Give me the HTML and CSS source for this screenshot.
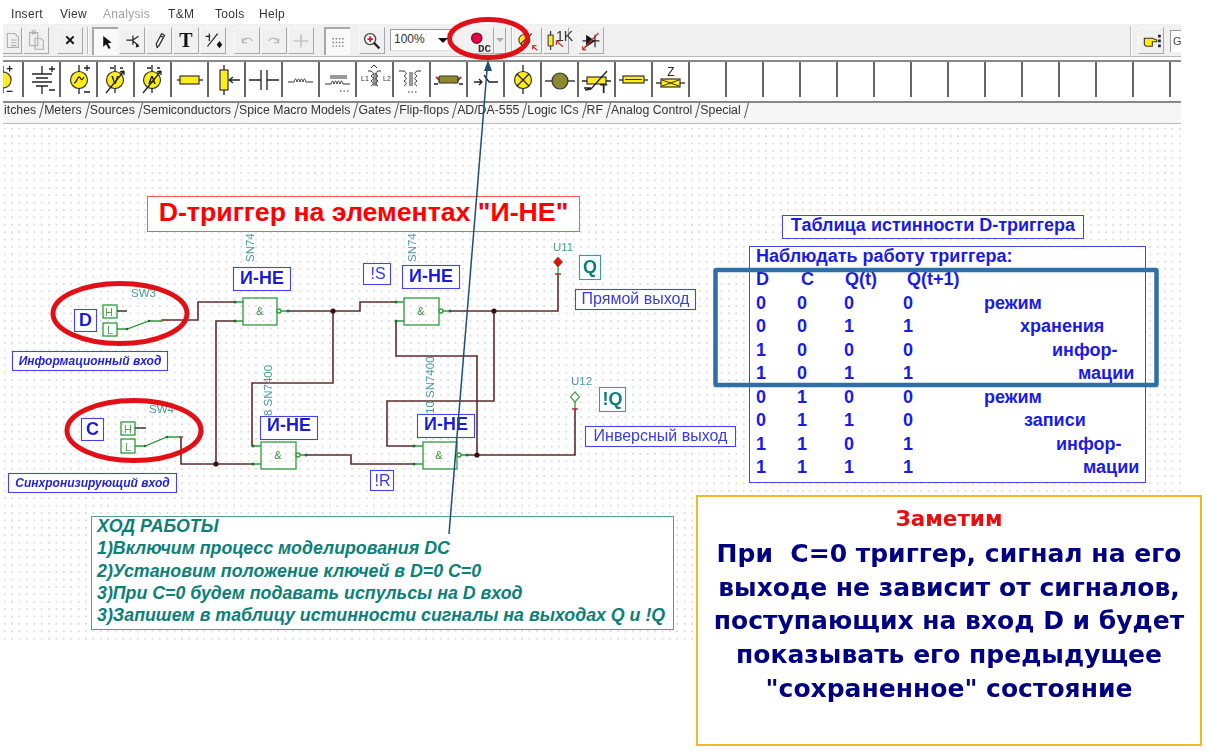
FILE: index.html
```html
<!DOCTYPE html>
<html lang="ru">
<head>
    <meta charset="UTF-8">
    <title>D-триггер на элементах И-НЕ</title>
    <link rel="stylesheet" href="styles.css">
</head>
<body>
<div class="app">
    <!-- Menu -->
    <div class="menu">
        <span class="m-insert">Insert</span><span class="m-view">View</span><span class="m-analysis">Analysis</span><span class="m-tm">T&amp;M</span><span class="m-tools">Tools</span><span>Help</span>
    </div>

    <!-- Main toolbar -->
    <div class="toolbar">
        <div class="btn cut"><svg viewBox="10 0 18 27"><path class="faint" d="M14 6h8l4 4v11H14z M18 13h6 M18 16h6 M18 19h6"/></svg></div>
        <div class="btn dim"><svg viewBox="0 0 26 27"><path class="faint" d="M6 5h9v14H6z M9 3h3v3H9z M12 11h6l3 3v9h-9z"/></svg></div>
        <div class="btn gap-8"><svg viewBox="0 0 26 27"><path class="x" d="M9 9l8 8 M17 9l-8 8"/></svg></div>
        <div class="vsep"></div>
        <div class="btn on gap-3"><svg viewBox="0 0 26 27"><path class="solid" d="M10 7l0 12 3-3 3 5 2-1-3-5 4-1z"/></svg></div>
        <div class="btn"><svg viewBox="0 0 26 27"><path class="line" d="M7 13h7 M14 8v10 M14 13l6-4 M14 14l6 5"/><path class="solid" d="M18 17l3 3-4 1z"/></svg></div>
        <div class="btn"><svg viewBox="0 0 26 27"><path class="line" d="M11 21l-1-4 6-11 3 2-6 11z M14 8l3 2"/></svg></div>
        <div class="btn serif">T</div>
        <div class="btn"><svg viewBox="0 0 26 27"><path class="line" d="M5 9h5 M9 6v8 M7 20L18 6"/><path class="solid" d="M20 14l3 4-3 4-3-4z"/></svg></div>
        <div class="btn gap-8"><svg viewBox="0 0 26 27"><path class="faint" d="M8 16a6 6 0 0 1 11-2 M8 11v5h5"/></svg></div>
        <div class="btn"><svg viewBox="0 0 26 27"><path class="faint" d="M18 16a6 6 0 0 0-11-2 M18 11v5h-5"/></svg></div>
        <div class="btn"><svg viewBox="0 0 26 27"><path class="faint" d="M5 14h16 M13 7v14"/></svg></div>
        <div class="btn on gap-10"><svg viewBox="0 0 26 27"><path class="dots" d="M7 10h13 M7 14h13 M7 18h13"/></svg></div>
        <div class="btn gap-9"><svg viewBox="0 0 26 27"><circle class="lens" cx="11" cy="12" r="6"/><path class="handle" d="M15 16l6 6"/><path class="red-plus" d="M8 12h6 M11 9v6"/></svg></div>
        <div class="zoom-select"><span>100%</span><i class="caret"></i></div>
        <div class="btn dc gap-14"><svg viewBox="0 0 28 27"><circle class="led" cx="11" cy="11" r="5.5"/></svg><b>DC</b></div>
        <div class="btn drop"><i class="caret light"></i></div>
        <div class="vsep small"></div>
        <div class="btn gap-3"><svg viewBox="0 0 26 27"><circle class="ylw" cx="8" cy="13" r="6"/><path class="line" d="M4 17L16 6"/><path class="dark-red" d="M17 20l5 4 M17 23v-4h4"/></svg></div>
        <div class="btn"><svg viewBox="0 0 29 27"><path class="line" d="M8 2v5 M8 20v5"/><rect class="ylw" x="5" y="7" width="6" height="13"/><path class="dark-red" d="M16 15l7 6 M15 19v-5h5"/></svg><b class="onek">1K</b></div>
        <div class="btn gap-9"><svg viewBox="0 0 27 27"><path class="solid" d="M8 7l10 7-10 7z"/><path class="line" d="M18 7v14 M4 14h19"/><path class="dark-red" d="M4 24L22 5 M4 24v-4 M4 24h4"/></svg></div>
        <div class="push"></div>
        <div class="vsep tall"></div>
        <div class="btn gap-6"><svg viewBox="0 0 27 27"><path class="ylw" d="M6 11h9l5 2v2h-5v5H8l-2-2z"/><path class="dots-v" d="M23 7v14"/></svg></div>
        <div class="field gap-6">G</div>
    </div>

    <!-- Component palette -->
    <div class="palette">
        <div class="cell first"><svg viewBox="16 0 20 35"><circle class="ylw" cx="16" cy="18" r="8.5"/><path class="line" d="M16 3v7 M16 26v6 M20 6h6 M23 3v6 M20 30h6"/></svg></div>
        <div class="cell"><svg viewBox="0 0 35 35"><path class="line" d="M18 4v8 M8 12h20 M12 16h12 M8 20h20 M12 24h12 M18 24v8 M25 7h6 M28 4v6 M25 28h6"/></svg></div>
        <div class="cell"><svg viewBox="0 0 35 35"><circle class="ylw" cx="18" cy="18" r="8.5"/><path class="line" d="M18 3v7 M18 26v6 M23 6h6 M26 3v6 M23 30h6 M13 21c3 0 3-6 5-6 2 0 2 6 5 0"/></svg></div>
        <div class="cell"><svg viewBox="0 0 35 35"><circle class="ylw" cx="17" cy="18" r="8.5"/><path class="line" d="M17 3v7 M17 26v5 M8 31l18-22 M26 9l-4 1 M26 9v4 M12 6h4 M22 6h3"/><text class="meter" x="17" y="22">V</text></svg></div>
        <div class="cell"><svg viewBox="0 0 35 35"><circle class="ylw" cx="17" cy="18" r="8.5"/><path class="line" d="M17 3v7 M17 26v5 M8 31l18-22 M26 9l-4 1 M26 9v4 M12 6h4 M22 6h3"/><text class="meter" x="17" y="22">A</text></svg></div>
        <div class="cell"><svg viewBox="0 0 35 35"><path class="line" d="M5 18h26"/><rect class="ylw" x="8" y="14" width="19" height="8"/></svg></div>
        <div class="cell"><svg viewBox="0 0 35 35"><path class="line" d="M15 3v30 M31 18H20 M24 15l-4 3 4 3"/><rect class="ylw" x="11" y="8" width="8" height="20"/></svg></div>
        <div class="cell"><svg viewBox="0 0 35 35"><path class="line" d="M3 18h12 M15 8v20 M21 8v20 M21 18h12"/></svg></div>
        <div class="cell"><svg viewBox="0 0 35 35"><path class="thin" d="M5 20h6c1-4 2-4 3 0 1-4 2-4 3 0 1-4 2-4 3 0 1-4 2-4 3 0h7"/></svg></div>
        <div class="cell"><svg viewBox="0 0 35 35"><path class="thin" d="M5 22h6c1-4 2-4 3 0 1-4 2-4 3 0 1-4 2-4 3 0 1-4 2-4 3 0h7 M10 14h17 M10 16h17"/><path class="dots" d="M20 29h9"/></svg></div>
        <div class="cell"><svg viewBox="0 0 35 35"><path class="thin" d="M11 9h3c3 2 3 3 0 5 3 2 3 3 0 5 3 2 3 3 0 5 M24 9h-3c-3 2-3 3 0 5-3 2-3 3 0 5-3 2-3 3 0 5 M17 11v13 M19 11v13 M14 6l3-3 3 3"/><text class="tiny" x="4" y="19">L1</text><text class="tiny" x="26" y="19">L2</text></svg></div>
        <div class="cell"><svg viewBox="0 0 35 35"><path class="thin" d="M5 9h5c3 2 3 3 0 5 3 2 3 3 0 5 3 2 3 3 0 5 M27 9h-4c-3 2-3 3 0 5-3 2-3 3 0 5-3 2-3 3 0 5 M16 10v14 M18 10v14"/><path class="dots" d="M14 30h9"/></svg></div>
        <div class="cell"><svg viewBox="0 0 35 35"><path class="red-line" d="M5 15l7 6 M30 15l-6 6"/><rect class="olive" x="8" y="14" width="19" height="7" rx="1"/><path class="line" d="M3 22h4 M28 22h4"/></svg></div>
        <div class="cell"><svg viewBox="0 0 35 35"><path class="line" d="M6 20h7 M11 17l3 3-3 3 M16 13l5 7 M21 20h9"/></svg></div>
        <div class="cell"><svg viewBox="0 0 35 35"><circle class="ylw" cx="18" cy="18" r="8.5"/><path class="line" d="M18 3v7 M18 26v6 M12 12l12 12 M24 12L12 24"/></svg></div>
        <div class="cell"><svg viewBox="0 0 35 35"><path class="line" d="M3 19h30"/><circle class="olive" cx="18" cy="19" r="8"/></svg></div>
        <div class="cell"><svg viewBox="0 0 35 35"><rect class="ylw" x="8" y="15" width="19" height="7"/><path class="line" d="M3 19h5 M27 19h5 M6 28l6-1 M12 27L28 9 M5 26h7"/></svg><b class="tee">T</b></div>
        <div class="cell"><svg viewBox="0 0 35 35"><path class="line" d="M3 18h29"/><rect class="ylw" x="7" y="14" width="21" height="7"/><path class="thin" d="M9 17.500h17"/></svg></div>
        <div class="cell"><svg viewBox="0 0 35 35"><path class="line" d="M3 21h29"/><rect class="ylw" x="8" y="17" width="19" height="8"/><path class="thin" d="M9 18l17 6 M9 24l17-6"/><text class="zee" x="18" y="14">Z</text></svg></div>
        <div class="cell"></div><div class="cell"></div><div class="cell"></div><div class="cell"></div>
        <div class="cell"></div><div class="cell"></div><div class="cell"></div><div class="cell"></div>
        <div class="cell"></div><div class="cell"></div><div class="cell"></div><div class="cell"></div>
        <div class="cell"></div><div class="cell"></div><div class="cell"></div>
    </div>

    <!-- Tabs -->
    <div class="tabs">
        <span class="tab">itches</span>
        <span class="tab">Meters</span>
        <span class="tab">Sources</span>
        <span class="tab">Semiconductors</span>
        <span class="tab">Spice Macro Models</span>
        <span class="tab">Gates</span>
        <span class="tab">Flip-flops</span>
        <span class="tab">AD/DA-555</span>
        <span class="tab">Logic ICs</span>
        <span class="tab">RF</span>
        <span class="tab">Analog Control</span>
        <span class="tab">Special</span>
    </div>

    <!-- Schematic sheet -->
    <div class="sheet">
        <svg class="schematic" viewBox="0 124 1181 516">
            <!-- wires -->
            <g class="wire">
                <path d="M163 320h35v-18h37"/>
                <path d="M288 311h72v-9h36"/>
                <path d="M450 311h108v-38"/>
                <path d="M396 321v35h81v99"/>
                <path d="M494 311v90h-107v45h27"/>
                <path d="M306 455h45v9h63"/>
                <path d="M252 446v-63h81v-72"/>
                <path d="M181 437v27h72"/>
                <path d="M216 464V321h19"/>
                <path d="M466 455h109v-47"/>
            </g>
            <circle class="node" cx="333" cy="311" r="2.600"/>
            <circle class="node" cx="494" cy="311" r="2.600"/>
            <circle class="node" cx="216" cy="464" r="2.600"/>
            <circle class="node" cx="477" cy="455" r="2.600"/>

            <!-- gates -->
            <g class="part">
                <rect x="243" y="298" width="34" height="27"/><circle cx="279" cy="311" r="2"/><path d="M235 302h8 M235 321h8 M281 311h7"/>
                <rect x="404" y="298" width="35" height="27"/><circle cx="441" cy="311" r="2"/><path d="M396 302h8 M396 321h8 M443 311h7"/>
                <rect x="261" y="442" width="35" height="27"/><circle cx="298" cy="455" r="2"/><path d="M253 446h8 M253 464h8 M300 455h6"/>
                <rect x="423" y="442" width="34" height="27"/><circle cx="459" cy="455" r="2"/><path d="M414 446h9 M414 464h9 M461 455h9"/>
                <!-- switches -->
                <rect x="103" y="305" width="14" height="13"/><rect x="103" y="323" width="14" height="13"/>
                <path d="M117 329h10l22-8h14"/>
                <rect x="121" y="422" width="14" height="13"/><rect x="121" y="439" width="14" height="14"/>
                <path d="M135 446h10l22-9h14"/>
                <path d="M558 262v11 M575 401v7"/>
            </g>
            <path class="stub" d="M117 311h10 M135 428h11"/>
            <g class="pins">
                <circle cx="235" cy="302" r="1.500"/><circle cx="235" cy="321" r="1.500"/><circle cx="288" cy="311" r="1.500"/>
                <circle cx="396" cy="302" r="1.500"/><circle cx="396" cy="321" r="1.500"/><circle cx="450" cy="311" r="1.500"/>
                <circle cx="253" cy="446" r="1.500"/><circle cx="253" cy="464" r="1.500"/><circle cx="306" cy="455" r="1.500"/>
                <circle cx="414" cy="446" r="1.500"/><circle cx="414" cy="464" r="1.500"/><circle cx="467" cy="455" r="1.500"/>
                <circle cx="127" cy="329" r="1.300"/><circle cx="149" cy="321" r="1.300"/><circle cx="145" cy="446" r="1.300"/><circle cx="167" cy="437" r="1.300"/>
            </g>
            <path class="tick" d="M161 320h4 M179 437h4 M555 274h6 M572 409h6"/>
            <text class="amp" x="260" y="315">&amp;</text>
            <text class="amp" x="421" y="315">&amp;</text>
            <text class="amp" x="278" y="459">&amp;</text>
            <text class="amp" x="439" y="459">&amp;</text>
            <text class="mid hl" x="109" y="316">H</text>
            <text class="mid hl" x="110" y="334">L</text>
            <text class="mid hl" x="128" y="433">H</text>
            <text class="mid hl" x="128" y="451">L</text>

            <!-- probes -->
            <path class="probe-on" d="M558 257l4.500 5-4.500 5-4.500-5z"/>
            <path class="probe-off" d="M575 392l4.500 5-4.500 5-4.500-5z"/>

            <!-- teal refs -->
            <text class="ref" x="131" y="297">SW3</text>
            <text class="ref" x="149" y="413">SW4</text>
            <text class="ref" x="553" y="251">U11</text>
            <text class="ref" x="571" y="385">U12</text>
            <text class="ref" transform="translate(254 262) rotate(-90)">SN74</text>
            <text class="ref" transform="translate(416 262) rotate(-90)">SN74</text>
            <text class="ref" transform="translate(272 416) rotate(-90)">8 SN7400</text>
            <text class="ref" transform="translate(434 414) rotate(-90)">10 SN7400</text>

            <!-- blue labels -->
            <g class="tag">
                <rect x="74.500" y="309.500" width="22" height="22"/>
                <rect x="81.500" y="418.500" width="22" height="22"/>
                <rect x="12.500" y="351.500" width="155" height="19"/>
                <rect x="8.500" y="473.500" width="168" height="19"/>
                <rect x="233.500" y="267.500" width="57" height="23"/>
                <rect x="402.500" y="265.500" width="57" height="23"/>
                <rect x="260.500" y="416.500" width="57" height="23"/>
                <rect x="417.500" y="414.500" width="57" height="23"/>
                <rect x="363.500" y="263.500" width="27" height="21"/>
                <rect x="370.500" y="470.500" width="23" height="20"/>
                <rect x="575.500" y="289.500" width="120" height="20"/>
                <rect x="585.500" y="426.500" width="150" height="20"/>
            </g>
            <g class="tag teal">
                <rect x="579.500" y="255.500" width="21" height="24"/>
                <rect x="599.500" y="387.500" width="26" height="24"/>
            </g>
            <text class="mid big" x="85.500" y="326">D</text>
            <text class="mid big" x="92.500" y="435">C</text>
            <text class="mid gate" x="262" y="283.500">И-НЕ</text>
            <text class="mid gate" x="431" y="281.500">И-НЕ</text>
            <text class="mid gate" x="289" y="431">И-НЕ</text>
            <text class="mid gate" x="446" y="430">И-НЕ</text>
            <text class="mid plain" x="378" y="279">!S</text>
            <text class="mid plain" x="382.500" y="486">!R</text>
            <text class="mid plain" x="635.500" y="304">Прямой выход</text>
            <text class="mid plain" x="660.500" y="441">Инверсный выход</text>
            <text class="mid italic" x="90" y="365">Информационный вход</text>
            <text class="mid italic" x="92.500" y="487">Синхронизирующий вход</text>
            <text class="mid big teal-text" x="590" y="273">Q</text>
            <text class="mid big teal-text" x="612.500" y="405">!Q</text>
        </svg>

        <div class="title">D-триггер на элементах "И-НЕ"</div>
        <div class="table-title">Таблица истинности D-триггера</div>

        <div class="truth">
            <div class="truth-head">Наблюдать работу триггера:</div>
            <div class="row head"><span>D</span><span>C</span><span>Q(t)</span><span>Q(t+1)</span></div>
            <div class="row"><span>0</span><span>0</span><span>0</span><span>0</span><span class="w0">режим</span></div>
            <div class="row"><span>0</span><span>0</span><span>1</span><span>1</span><span class="w1">хранения</span></div>
            <div class="row"><span>1</span><span>0</span><span>0</span><span>0</span><span class="w2">инфор-</span></div>
            <div class="row"><span>1</span><span>0</span><span>1</span><span>1</span><span class="w3">мации</span></div>
            <div class="row"><span>0</span><span>1</span><span>0</span><span>0</span><span class="w0">режим</span></div>
            <div class="row"><span>0</span><span>1</span><span>1</span><span>0</span><span class="w4">записи</span></div>
            <div class="row"><span>1</span><span>1</span><span>0</span><span>1</span><span class="w5">инфор-</span></div>
            <div class="row"><span>1</span><span>1</span><span>1</span><span>1</span><span class="w6">мации</span></div>
        </div>

        <div class="steps">
            <div>ХОД РАБОТЫ</div>
            <div>1)Включим процесс моделирования DC</div>
            <div>2)Установим положение ключей в D=0 C=0</div>
            <div>3)При C=0 будем подавать испульсы на D вход</div>
            <div>3)Запишем в таблицу истинности сигналы на выходах Q и !Q</div>
        </div>
    </div>
</div>

<!-- Slide annotations -->
<div class="note">
    <div class="note-head">Заметим</div>
    <p>При&nbsp; C=0 триггер, сигнал на его<br>выходе не зависит от сигналов,<br>поступающих на вход D и будет<br>показывать его предыдущее<br>"сохраненное" состояние</p>
</div>
<svg class="marks" viewBox="0 0 1207 751">
    <rect class="frame" x="715.500" y="270" width="441" height="115" rx="1"/>
    <path class="arrow" d="M449 534L487 70"/>
    <path class="arrow-head" d="M488 60l4 11h-8z"/>
    <ellipse class="ring" cx="120" cy="313.500" rx="67" ry="30"/>
    <ellipse class="ring" cx="134" cy="430.500" rx="67" ry="30"/>
    <ellipse class="ring" cx="488.500" cy="38.500" rx="39" ry="19"/>
</svg>
</body>
</html>
```
FILE: styles.css
```css
* { box-sizing: border-box; margin: 0; padding: 0; }
body { width: 1207px; height: 751px; background: white; font-family: "Liberation Sans", Arial, sans-serif; overflow: hidden; position: relative; }

.app { width: 1181px; height: 640px; display: flex; flex-direction: column; filter: blur(0.35px); }

/* Menu */
.menu { height: 24px; padding: 7px 0 0 11px; display: flex; font-size: 12px; letter-spacing: 0.3px; color: #333; white-space: nowrap; }
.m-insert { width: 49px; }
.m-view { width: 43px; }
.m-analysis { width: 65px; color: #a0a0a0; }
.m-tm { width: 47px; }
.m-tools { width: 44px; }

/* Toolbar */
.toolbar { height: 33px; margin-left: 3px; padding-top: 3px; display: flex; align-items: flex-start; background: #f0f0f0; border-bottom: 1px solid #bbb; }
.btn { position: relative; flex: none; width: 26px; height: 27px; margin-left: 1px; border-right: 1.5px solid #a8a8a8; border-bottom: 1.5px solid #a8a8a8; border-top: 1px solid #f8f8f8; border-left: 1px solid #f8f8f8; text-align: center; }
.btn svg { display: block; width: 100%; height: 100%; }
.btn.cut { width: 19px; margin-left: 0; border-left: none; }
.btn.on { border: none; border-top: 2px solid #a8a8a8; border-left: 2px solid #a8a8a8; background: #fafafa; height: 28px; }
.btn.serif { font: bold 20px/24px "Liberation Serif", serif; color: #111; }
.btn.dc { width: 29px; }
.btn.dc b { position: absolute; left: 12px; top: 16px; font: bold 11px/11px "Liberation Mono", monospace; color: #333; }
.btn.drop { width: 12px; margin-left: 0; }
.onek { position: absolute; left: 12px; top: 1px; font: 14px/14px "Liberation Sans", sans-serif; color: #333; }
.gap-3 { margin-left: 3px; }
.gap-6 { margin-left: 6px; }
.gap-8 { margin-left: 8px; }
.gap-9 { margin-left: 9px; }
.gap-10 { margin-left: 10px; }
.gap-14 { margin-left: 14px; }
.vsep { flex: none; width: 2px; height: 27px; margin-left: 4px; border-left: 1px solid #bbb; border-right: 1px solid #fff; }
.vsep.small { margin-left: 5px; }
.vsep.tall { height: 30px; margin-top: -1px; }
.push { flex: 1; }
.zoom-select { position: relative; flex: none; width: 61px; height: 22px; margin: 2px 0 0 5px; padding: 2px 0 0 3px; background: white; border-top: 1px solid #999; border-left: 1px solid #999; border-bottom: 1px solid #ddd; font-size: 12px; color: #333; }
.caret { position: absolute; right: 3px; top: 8px; width: 0; height: 0; border: 5px solid transparent; border-top: 5px solid #111; border-bottom: none; }
.caret.light { right: 1px; top: 10px; border-width: 4px; border-top: 4px solid #aaa; border-bottom: none; }
.field { flex: none; width: 11px; height: 22px; margin-top: 3px; padding-left: 2px; overflow: hidden; background: white; border-top: 1px solid #999; border-left: 1px solid #999; font-size: 11px; line-height: 20px; color: #444; }

/* Palette */
.palette { height: 41px; margin-left: 3px; margin-top: 3px; padding-bottom: 4px; display: flex; overflow: hidden; border-top: 2px solid #888; }
.cell { position: relative; flex: none; width: 37px; height: 35px; border-right: 2px solid #666; }
.cell.first { width: 21px; }
.cell svg { display: block; width: 35px; height: 35px; }
.cell.first svg { width: 19px; }
.tee { position: absolute; left: 21px; top: 21px; font-size: 12px; line-height: 12px; color: #222; }

/* Tabs */
.tabs { height: 23px; margin-left: 3px; display: flex; align-items: flex-start; padding-top: 0; background: #f6f6f6; border-top: 2px solid #888; border-bottom: 1px solid #bbb; font-size: 12.3px; color: #333; white-space: nowrap; overflow: hidden; }
.tab { position: relative; padding: 0 4px 0 1px; margin-right: 3px; }
.tab::after { content: ""; position: absolute; right: -2px; top: 0; width: 1px; height: 15px; background: #555; transform: skewX(-15deg); }

/* Sheet */
.sheet { position: relative; flex: 1; margin-top: 0; background-image: radial-gradient(#dedede 0.7px, transparent 0.9px); background-size: 7.4px 7.4px; background-position: 1px 1px; }
.schematic { position: absolute; left: 0; top: 0; width: 1181px; height: 516px; }
.schematic text { font-family: "Liberation Sans", Arial, sans-serif; }

.wire { fill: none; stroke: #5c2d2d; stroke-width: 1.6; }
.node { fill: #3a0f14; }
.part { fill: none; stroke: #2f9a3c; stroke-width: 1.300; }
.part circle { fill: white; }
.stub { fill: none; stroke: #333; stroke-width: 1.300; }
.pins circle { fill: #1f6e2a; }
.tick { fill: none; stroke: #c0392b; stroke-width: 1.300; }
.amp { font-size: 11px; fill: #3d8a3d; text-anchor: middle; }
.hl { font-size: 11px; fill: #58a058; }
.probe-on { fill: #d8140c; stroke: #8a2a18; stroke-width: 0.6; }
.probe-off { fill: white; stroke: #4f9e50; stroke-width: 1.200; }
.ref { font-size: 11.500px; fill: #4a9a9a; }
.tag rect { fill: white; fill-opacity: 0.85; stroke: #4444ee; stroke-width: 1.100; }
.tag.teal rect { stroke: #3d9a94; }
.mid { text-anchor: middle; }
.big { font-size: 18px; font-weight: bold; fill: #1a1ae0; }
.gate { font-size: 18px; font-weight: bold; fill: #1a1ae0; }
.plain { font-size: 16px; fill: #3a3ae8; }
.italic { font-size: 12px; font-weight: bold; font-style: italic; fill: #1f1fd8; }
.big.teal-text { fill: #0b8078; }

/* Big text blocks on the sheet */
.title { position: absolute; left: 147px; top: 72px; width: 433px; height: 36px; border: 1px solid #f55; background: white; color: #f00; font-size: 26.700px; font-weight: bold; line-height: 31px; text-align: center; white-space: nowrap; }
.table-title { position: absolute; left: 782px; top: 91px; width: 302px; height: 24px; border: 1px solid #4444ee; background: white; color: #1a1ae6; font-size: 18px; font-weight: bold; line-height: 19px; text-align: center; white-space: nowrap; }
.truth { position: absolute; left: 749px; top: 122px; width: 397px; height: 237px; padding: 0 0 0 6px; border: 1px solid #4444ee; background: white; color: #1a1ae6; font-size: 18px; font-weight: bold; line-height: 23.500px; white-space: nowrap; }
.truth-head { height: 21px; line-height: 19px; }
.row { display: grid; grid-template-columns: 41px 47px 59px 81px 1fr; height: 23.500px; }
.row.head { grid-template-columns: 45px 44px 62px 77px 1fr; }
.w0 { padding-left: 0; }
.w1 { padding-left: 36px; }
.w2 { padding-left: 68px; }
.w3 { padding-left: 94px; }
.w4 { padding-left: 40px; }
.w5 { padding-left: 72px; }
.w6 { padding-left: 99px; }
.steps { position: absolute; left: 91px; top: 392px; width: 583px; height: 114px; padding: 0 0 0 5px; border: 1.500px solid #4f9d96; background: white; color: #0b8078; font-size: 17.800px; font-weight: bold; font-style: italic; line-height: 22.300px; white-space: nowrap; }
.steps div:first-child { margin-top: -2px; }

/* Annotations */
.note { position: absolute; left: 696px; top: 495px; width: 506px; height: 251px; padding-top: 9px; border: 2.500px solid #f0b92a; background: white; text-align: center; font-family: "DejaVu Sans", "Noto Sans", sans-serif; font-weight: bold; color: #000080; filter: blur(0.3px); }
.note-head { color: #e80f0f; font-size: 21.500px; line-height: 26px; }
.note p { margin-top: 5px; font-size: 25px; line-height: 33.700px; white-space: nowrap; }
.marks { position: absolute; left: 0; top: 0; width: 1207px; height: 751px; pointer-events: none; }
.frame { fill: none; stroke: #2e6fa8; stroke-width: 4.500; }
.arrow { fill: none; stroke: #1f4e79; stroke-width: 1.500; }
.arrow-head { fill: #1f4e79; }
.ring { fill: none; stroke: #e30f17; stroke-width: 5; }

/* Icon parts */
.line { fill: none; stroke: #222; stroke-width: 1.300; }
.thin { fill: none; stroke: #333; stroke-width: 1; }
.faint { fill: none; stroke: #b0b0b0; stroke-width: 1.200; }
.x { fill: none; stroke: #111; stroke-width: 2; }
.solid { fill: #111; }
.dots { fill: none; stroke: #777; stroke-width: 1.500; stroke-dasharray: 1.500 2; }
.dots-v { fill: none; stroke: #222; stroke-width: 3; stroke-dasharray: 3 2.500; }
.lens { fill: #fff; stroke: #444; stroke-width: 1.500; }
.handle { fill: none; stroke: #222; stroke-width: 2.500; }
.red-plus { fill: none; stroke: #d81e2c; stroke-width: 1.800; }
.led { fill: #e8004c; stroke: #8a0f1f; stroke-width: 1.500; }
.ylw { fill: #ffec1a; stroke: #333; stroke-width: 1.200; }
.olive { fill: #8c8a2c; stroke: #333; stroke-width: 1.200; }
.dark-red { fill: none; stroke: #c8323a; stroke-width: 1.500; }
.red-line { fill: none; stroke: #d8202a; stroke-width: 2; }
.meter { font: bold 11px "Liberation Sans", sans-serif; fill: #222; text-anchor: middle; }
.tiny { font: 7px "Liberation Sans", sans-serif; fill: #333; }
.zee { font: 12px "Liberation Sans", sans-serif; fill: #222; text-anchor: middle; }
```
